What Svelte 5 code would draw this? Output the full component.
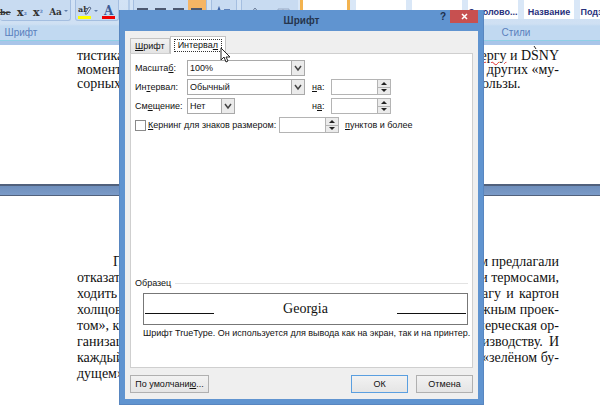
<script>
  let tab = 'spacing';
  let scale = '100%';
  let spacing = 'Обычный';
  let offset = 'Нет';
  let spacingBy = '';
  let offsetBy = '';
  let kerning = false;
  let kerningSize = '';

  const aligns = ['left', 'center', 'right', 'justify'];
  const tiles = ['', '', '', 'Заголово...', 'Название', 'Подзагол...'];

  const topLines = [
    ['моменты', 'е других «му-'],
    ['сорных»', 'ользы.']
  ];

  const bottomLines = [
    ['П', 'м предлагали'],
    ['отказать', 'и термосами,'],
    ['ходить', 'агу и картон'],
    ['холщов', 'жным проек-'],
    ['том», к', 'мерческая ор-'],
    ['ганизаци', 'изводству. И'],
    ['каждый', '«зелёном бу-'],
    ['дущем»', '']
  ];

  const step = (value, by) => String((parseFloat(value) || 0) + by);
</script>

<main class="word">
  <header class="ribbon">
    <section class="group font-group">
      <div class="tools">
        <div class="cluster">
          <button class="tool strike" aria-label="Зачёркнутый"><s>be</s></button>
          <button class="tool">x<sub>₂</sub></button>
          <button class="tool">x<sup>²</sup></button>
          <button class="tool small">Aa<i class="drop"></i></button>
        </div>
        <div class="cluster">
          <button class="tool" aria-label="Цвет выделения">
            <svg width="14" height="16" viewBox="0 0 14 16">
              <text x="0" y="8" font-size="8" font-weight="bold" fill="#333">ab</text>
              <path d="M7 10 L11 3 L13 4 L9 10 Z" fill="#dfe8f5" stroke="#566b8d" />
              <rect x="0" y="12" width="13" height="3" fill="#ffff00" />
            </svg>
            <i class="drop"></i>
          </button>
          <button class="tool" aria-label="Цвет текста">
            <svg width="14" height="16" viewBox="0 0 14 16">
              <text x="2" y="11" font-size="12" font-weight="bold" fill="#3d5c96">A</text>
              <rect x="0" y="12" width="13" height="3" fill="#f00000" />
            </svg>
          </button>
        </div>
      </div>
      <h2>Шрифт</h2>
    </section>

    <section class="group para-group">
      <div class="tools">
        <div class="cluster">
          {#each aligns as align}
            <button class="tool align" class:active={align === 'justify'} aria-label={align}>
              <svg width="12" height="12" viewBox="0 0 12 12">
                <path d="M0 3 H11 M0 6 H8 M0 9 H11" stroke="#4c5870" stroke-width="2" />
              </svg>
            </button>
          {/each}
        </div>
        <div class="cluster">
          <button class="tool spacing" aria-label="Междустрочный интервал">
            <svg width="18" height="12" viewBox="0 0 18 12">
              <path d="M1 10 L4 2 L7 10 M9 4 H15 M9 7 H15" fill="none" stroke="#3e66a8" stroke-width="1.5" />
            </svg>
          </button>
        </div>
        <div class="cluster">
          <button class="tool fill" aria-label="Заливка">
            <svg width="14" height="14" viewBox="0 0 14 14">
              <path d="M2 8 L6 3 L11 9 L7 13 Z" fill="none" stroke="#6b7c98" />
            </svg>
          </button>
          <button class="tool fill" aria-label="Границы">
            <svg width="14" height="14" viewBox="0 0 14 14">
              <path d="M1 4 H12 V13 H1 Z M6 4 V13 M1 8 H12" fill="none" stroke="#9aaac4" />
            </svg>
          </button>
        </div>
      </div>
      <h2>Абзац</h2>
    </section>

    <section class="group style-group">
      <div class="gallery">
        {#each tiles as tile, i}
          <button class="tile" class:selected={i === 0} aria-label={tile || 'Стиль'}>{tile}</button>
        {/each}
      </div>
      <h2>Стили</h2>
    </section>
  </header>

  <article class="sheet first">
    <p class="line">
      <span>тистика</span>
      <span class="tail">
        <span class="misspelled">бергу</span> и DSNY
        <svg class="speck" width="4" height="4" viewBox="0 0 4 4">
          <path d="M1 0 L3 3" stroke="#222" />
        </svg>
      </span>
    </p>
    {#each topLines as [head, tail], i}
      <p class="line"><span>{head}</span><span class="tail" class:loose={i === 1}>{tail}</span></p>
    {/each}
  </article>
  <div class="page-gap"></div>
  <article class="sheet second">
    {#each bottomLines as [head, tail], i}
      <p class="line" class:indent={i === 0}><span>{head}</span><span class="tail">{tail}</span></p>
    {/each}
  </article>

  <div class="overlay">
    <div class="dialog" role="dialog" aria-labelledby="title">
      <div class="titlebar">
        <h1 id="title">Шрифт</h1>
        <button class="help">?</button>
        <button class="close" aria-label="Закрыть">
          <svg width="7" height="7" viewBox="0 0 7 7">
            <path d="M1 1 L6 6 M6 1 L1 6" stroke="#fff" stroke-width="1.5" />
          </svg>
        </button>
      </div>

      <div class="body">
        <div class="tabs" role="tablist">
          <button role="tab" class="tab" class:current={tab === 'font'} on:click={() => (tab = 'font')}>
            <span><u>Ш</u>рифт</span>
          </button>
          <button role="tab" class="tab" class:current={tab === 'spacing'} on:click={() => (tab = 'spacing')}>
            <span>Интерва<u>л</u></span>
          </button>
          <svg class="cursor" width="11" height="17" viewBox="0 0 11 17">
            <path d="M1 1 V13 L4 10 L6 15 L8 14 L6 10 H10 Z" fill="#fff" stroke="#222" />
          </svg>
        </div>

        <div class="panel">
          <div class="row">
            <label class="name" for="scale">Масшта<u>б</u>:</label>
            <div class="combo">
              <select id="scale" bind:value={scale}>
                <option>100%</option>
                <option>150%</option>
                <option>200%</option>
              </select>
              <svg viewBox="0 0 12 14"><path d="M3 5 L6 9 L9 5" /></svg>
            </div>
          </div>

          <div class="row">
            <label class="name" for="spacing">Ин<u>т</u>ервал:</label>
            <div class="combo">
              <select id="spacing" bind:value={spacing}>
                <option>Обычный</option>
                <option>Разреженный</option>
                <option>Уплотненный</option>
              </select>
              <svg viewBox="0 0 12 14"><path d="M3 5 L6 9 L9 5" /></svg>
            </div>
            <label class="by" for="spacing-by"><u>н</u>а:</label>
            <div class="spin">
              <input id="spacing-by" type="text" bind:value={spacingBy} />
              <div class="arrows">
                <button aria-label="Больше" on:click={() => (spacingBy = step(spacingBy, 1))}></button>
                <button aria-label="Меньше" class="down" on:click={() => (spacingBy = step(spacingBy, -1))}></button>
              </div>
            </div>
          </div>

          <div class="row">
            <label class="name" for="offset">См<u>е</u>щение:</label>
            <div class="combo-space">
              <div class="combo short">
                <select id="offset" bind:value={offset}>
                  <option>Нет</option>
                  <option>Вверх</option>
                  <option>Вниз</option>
                </select>
                <svg viewBox="0 0 12 14"><path d="M3 5 L6 9 L9 5" /></svg>
              </div>
            </div>
            <label class="by" for="offset-by">н<u>а</u>:</label>
            <div class="spin">
              <input id="offset-by" type="text" bind:value={offsetBy} />
              <div class="arrows">
                <button aria-label="Больше" on:click={() => (offsetBy = step(offsetBy, 1))}></button>
                <button aria-label="Меньше" class="down" on:click={() => (offsetBy = step(offsetBy, -1))}></button>
              </div>
            </div>
          </div>

          <div class="row">
            <label class="kerning">
              <input type="checkbox" bind:checked={kerning} />
              <span><u>К</u>ернинг для знаков размером:</span>
            </label>
            <div class="spin">
              <input id="kerning-size" type="text" bind:value={kerningSize} />
              <div class="arrows">
                <button aria-label="Больше" on:click={() => (kerningSize = step(kerningSize, 1))}></button>
                <button aria-label="Меньше" class="down" on:click={() => (kerningSize = step(kerningSize, -1))}></button>
              </div>
            </div>
            <label class="points" for="kerning-size"><u>п</u>унктов и более</label>
          </div>

          <div class="sample">
            <h3>Образец</h3>
            <div class="preview">
              <hr />
              <span>Georgia</span>
              <hr />
            </div>
            <p>Шрифт TrueType. Он используется для вывода как на экран, так и на принтер.</p>
          </div>
        </div>

        <div class="actions">
          <button class="action default">По умолчани<u>ю</u>...</button>
          <button class="action ok">ОК</button>
          <button class="action">Отмена</button>
        </div>
      </div>
    </div>
  </div>
</main>

<style>
  :global(body) {
    background: #fff;
  }

  .word {
    position: relative;
    min-height: 100vh;
    overflow: hidden;
    font-family: "Liberation Sans", Arial, sans-serif;
    font-size: 9px;
    color: #111;
  }

  h1, h2, h3, p {
    margin: 0;
    font-weight: normal;
  }

  button, input, select {
    box-sizing: border-box;
    margin: 0;
    padding: 0;
    border: 0;
    border-radius: 0;
    background: none;
    font: inherit;
    color: inherit;
  }

  /* ribbon */
  .ribbon {
    display: flex;
    height: 40px;
    overflow: hidden;
    background: linear-gradient(#d3e3f5, #cfe0f3 24px, #c1d9f1 26px, #c1d9f1);
    border-bottom: 1px solid #8fd0e6;
    box-shadow: 0 4px 0 #a9c5e9;
  }

  .group {
    display: flex;
    flex-direction: column;
    flex: none;
    box-sizing: border-box;
    border-right: 2px solid #b3cbe8;
  }

  .font-group {
    width: 130px;
  }

  .para-group {
    width: 168px;
  }

  .style-group {
    width: 438px;
  }

  .group h2 {
    margin-top: auto;
    height: 14px;
    line-height: 14px;
    font-size: 10px;
    text-align: center;
    color: #5a80bd;
  }

  .font-group h2 {
    padding-right: 86px;
  }

  .tools {
    display: flex;
    gap: 4px;
  }

  .cluster {
    display: flex;
    height: 21px;
    box-sizing: border-box;
    border: 1px solid #a4bee0;
    border-top: 0;
    border-radius: 0 0 3px 3px;
    background: #c8dbf1;
  }

  .font-group .cluster:first-child {
    justify-content: space-between;
    width: 71px;
    border-left: 0;
  }

  .tool {
    display: flex;
    align-items: center;
    justify-content: center;
    padding: 4px 2px 0;
    font: bold 11px "DejaVu Serif", serif;
    color: #333;
  }

  .tool sub,
  .tool sup {
    font-size: 7px;
    color: #4f78b8;
  }

  .strike {
    padding-left: 0;
    font-size: 8px;
  }

  .tool.small {
    font-size: 9px;
  }

  .drop {
    margin-left: 2px;
    border: 2px solid transparent;
    border-top-color: #5e7fae;
  }

  .para-group .tools {
    padding-left: 3px;
  }

  .align {
    width: 18px;
  }

  .align.active {
    background: #f5b565;
  }

  .spacing {
    width: 24px;
  }

  .fill {
    width: 28px;
  }

  .gallery {
    display: flex;
    gap: 6px;
    padding-left: 2px;
    background: #d9e7f7;
  }

  .tile {
    flex: none;
    width: 50px;
    height: 19px;
    padding-top: 5px;
    background: #fff;
    font-weight: bold;
    color: #28307c;
    white-space: nowrap;
  }

  .tile.selected {
    border: 3px solid #f3b34f;
    border-top: 0;
  }

  /* document */
  .sheet {
    box-sizing: border-box;
    padding: 0 41px 0 77px;
    font-family: "Liberation Serif", serif;
    font-size: 14px;
    color: #111;
  }

  .first {
    height: 143px;
    padding-top: 8px;
    line-height: 14px;
  }

  .second {
    padding-top: 58px;
    line-height: 16px;
  }

  .line {
    display: flex;
    justify-content: space-between;
    white-space: nowrap;
  }

  .indent {
    padding-left: 36px;
  }

  .tail {
    position: relative;
    min-width: 77px;
    text-align-last: justify;
  }

  .tail.loose {
    text-align-last: left;
  }

  .misspelled {
    text-decoration: underline wavy #e03030 1px;
  }

  .speck {
    position: absolute;
    top: -3px;
    right: 22px;
  }

  .page-gap {
    height: 12px;
    box-sizing: border-box;
    border-top: 2px solid #51617c;
    border-bottom: 1px solid #51617c;
    background: linear-gradient(#6f8fbc, #7b9bc8);
  }

  /* dialog */
  .overlay {
    position: absolute;
    inset: 0;
    display: flex;
    justify-content: center;
    align-items: flex-start;
    padding: 10px 0 0 3px;
  }

  .dialog {
    box-sizing: border-box;
    width: 365px;
    padding: 0 5px 5px;
    border: 1px solid #5886c0;
    border-top: 0;
    background: #6094d0;
  }

  .titlebar {
    display: grid;
    grid-template-columns: 1fr auto 1fr;
    height: 21px;
  }

  .titlebar h1 {
    grid-column: 2;
    grid-row: 1;
    line-height: 21px;
    font-size: 10px;
    font-weight: bold;
    color: #26354d;
  }

  .help {
    grid-column: 3;
    grid-row: 1;
    justify-self: end;
    width: 14px;
    height: 13px;
    margin-right: 28px;
    font-size: 10px;
    font-weight: bold;
    color: #1d2f4c;
  }

  .close {
    grid-column: 3;
    grid-row: 1;
    justify-self: end;
    width: 28px;
    height: 13px;
    line-height: 0;
    background: #c75050;
  }

  .body {
    padding: 5px 5px 6px;
    background: #efefef;
  }

  .tabs {
    position: relative;
    display: flex;
    align-items: flex-end;
    height: 17px;
  }

  .tab {
    height: 15px;
    padding: 0 4px;
    border: 1px solid #c3c3c3;
    border-bottom: 0;
    background: linear-gradient(#f2f2f2, #e4e4e4);
  }

  .tab.current {
    z-index: 1;
    height: 18px;
    margin-bottom: -1px;
    padding: 0 3px;
    background: #fff;
  }

  .tab.current span {
    display: block;
    padding: 0 3px;
    border: 1px dotted #333;
    line-height: 11px;
  }

  .cursor {
    position: absolute;
    z-index: 2;
    top: 11px;
    left: 90px;
  }

  .panel {
    display: flex;
    flex-direction: column;
    gap: 3px;
    box-sizing: border-box;
    height: 315px;
    padding: 6px 4px 0;
    border: 1px solid #cfcfcf;
    background: #fff;
  }

  .row {
    display: flex;
    align-items: center;
    height: 16px;
  }

  .name {
    width: 52px;
    white-space: nowrap;
  }

  .combo {
    display: grid;
    width: 118px;
    height: 16px;
  }

  .combo-space {
    width: 118px;
  }

  .combo.short {
    width: 48px;
  }

  .combo select {
    grid-area: 1 / 1;
    width: 100%;
    padding: 0 2px;
    border: 1px solid #a9a9a9;
    appearance: none;
    background: #fff;
  }

  .combo svg {
    grid-area: 1 / 1;
    justify-self: end;
    box-sizing: border-box;
    width: 14px;
    height: 16px;
    border: 1px solid #a9a9a9;
    background: #ebebeb;
    pointer-events: none;
  }

  .combo path {
    fill: none;
    stroke: #444;
    stroke-width: 1.5;
  }

  .by {
    width: 19px;
    margin-left: 7px;
  }

  .spin {
    display: flex;
    box-sizing: border-box;
    width: 60px;
    height: 16px;
    border: 1px solid #b4b4b4;
  }

  .spin input {
    flex: 1;
    min-width: 0;
    padding: 0 2px;
  }

  .arrows {
    display: flex;
    flex-direction: column;
    width: 12px;
    border-left: 1px solid #b4b4b4;
  }

  .arrows button {
    display: flex;
    flex: 1;
    align-items: center;
    justify-content: center;
    background: #ebebeb;
  }

  .arrows button::before {
    content: "";
    border: 3px solid transparent;
    border-top-width: 0;
    border-bottom-color: #222;
  }

  .arrows button.down {
    border-top: 1px solid #b4b4b4;
  }

  .arrows button.down::before {
    border-top: 3px solid #222;
    border-bottom-width: 0;
  }

  .kerning {
    display: flex;
    align-items: center;
    gap: 2px;
    width: 144px;
    white-space: nowrap;
  }

  .kerning input {
    flex: none;
    width: 11px;
    height: 11px;
    border: 1px solid #8a8a8a;
    appearance: none;
    background: #fff;
  }

  .kerning input:checked {
    background: #444;
  }

  .points {
    margin-left: 6px;
  }

  .sample {
    margin-top: auto;
    padding-bottom: 28px;
  }

  .sample h3 {
    display: flex;
    align-items: center;
    gap: 4px;
    line-height: 12px;
    font-size: 9px;
  }

  .sample h3::after {
    content: "";
    flex: 1;
    border-top: 1px solid #e3e3e3;
  }

  .preview {
    display: flex;
    align-items: center;
    justify-content: space-between;
    box-sizing: border-box;
    height: 32px;
    margin: 4px 0 2px 8px;
    padding: 0 1px;
    border: 1px solid #777;
    font: 14px "Liberation Serif", serif;
    color: #111;
  }

  .preview hr {
    width: 69px;
    margin: 8px 0 0;
    border: 0;
    border-top: 1px solid #111;
  }

  .sample p {
    padding-left: 8px;
    line-height: 12px;
    white-space: nowrap;
  }

  .actions {
    display: flex;
    gap: 8px;
    padding-top: 7px;
  }

  .action {
    width: 57px;
    height: 18px;
    border: 1px solid #b0b0b0;
    background: linear-gradient(#f2f2f2, #e5e5e5);
  }

  .action.default {
    width: 79px;
    margin-right: auto;
  }

  .action.ok {
    border-color: #5a9fe0;
  }
</style>
